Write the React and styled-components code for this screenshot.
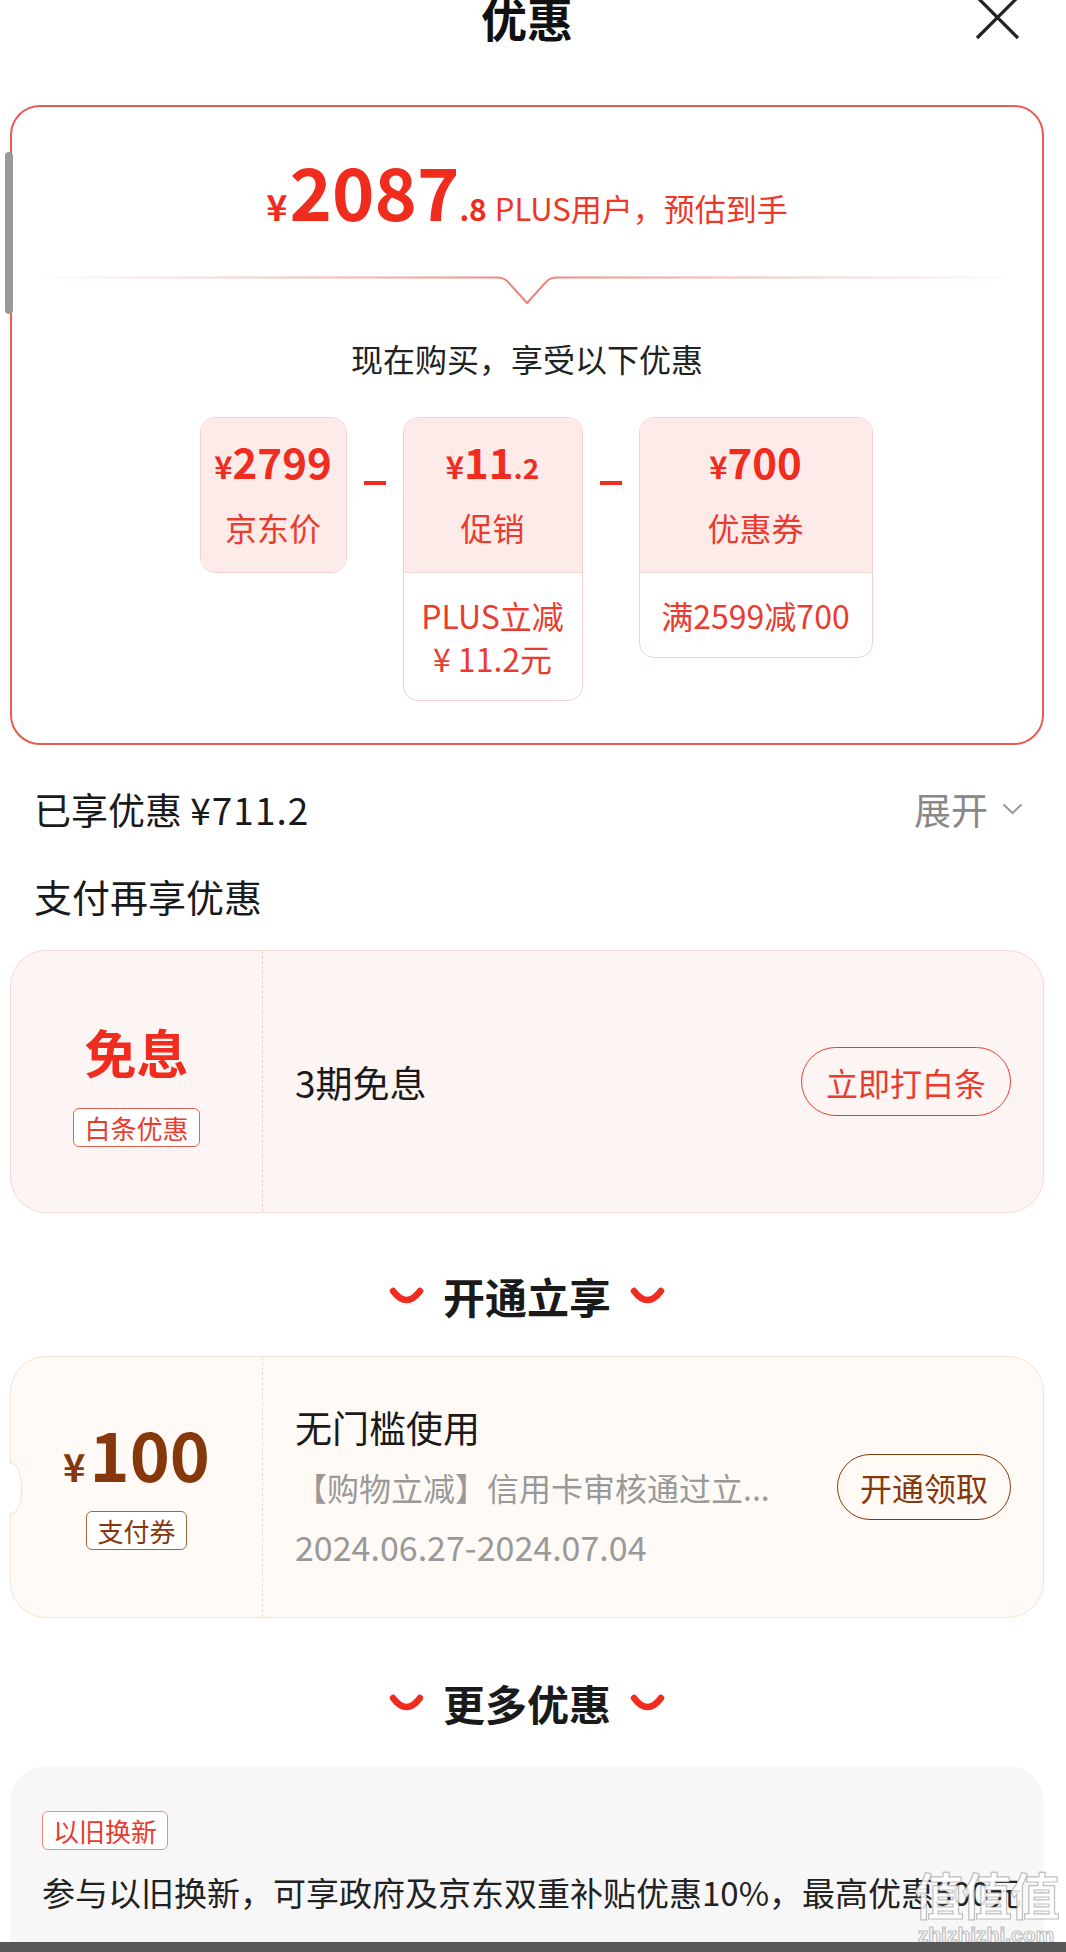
import React from "react";
import styled, { createGlobalStyle } from "styled-components";

const RED = "#ef2c1d";
const RED_SOFT = "#e93b2e";
const BROWN = "#86380d";

const Global = createGlobalStyle`
  html, body { margin: 0; padding: 0; background: #fff; }
  body {
    font-family: "Noto Sans CJK SC", "Noto Sans", Roboto, sans-serif;
    -webkit-font-smoothing: antialiased;
  }
  * { box-sizing: border-box; }
`;

const Page = styled.div`
  position: relative;
  width: 1066px;
  height: 1952px;
  overflow: hidden;
  background: #fff;
`;

const Header = styled.header`
  display: grid;
  grid-template-columns: 1fr auto 1fr;
  align-items: start;
  height: 105px;
  margin: 0 22px 0 10px;
`;

const Title = styled.h1`
  grid-column: 2;
  margin: -6px 0 0;
  font-size: 46px;
  line-height: 46px;
  font-weight: 700;
  color: #111;
`;

const Close = styled.svg`
  grid-column: 3;
  justify-self: end;
  margin: -5px 24px 0 0;
  width: 45px;
  height: 45px;
`;

const PriceCard = styled.section`
  margin: 0 22px 0 10px;
  height: 640px;
  border: 2px solid #ea5a4e;
  border-radius: 30px;
  display: flex;
  flex-direction: column;
  align-items: center;
`;

const PriceLine = styled.div`
  display: flex;
  align-items: baseline;
  margin-top: 47px;
  color: ${RED};
`;

const Num = styled.span`
  font-size: ${(p) => p.$size}px;
  font-weight: ${(p) => (p.$light ? 400 : 700)};
  line-height: 1;
  margin-left: ${(p) => p.$ml || 0}px;
  letter-spacing: ${(p) => p.$ls || 0}px;
  color: ${(p) => p.$color || "inherit"};
`;

const Divider = styled.svg`
  display: block;
  margin-top: 50px;
  width: 964px;
  height: 30px;
`;

const Subtitle = styled.div`
  margin-top: 32px;
  font-size: 32px;
  line-height: 40px;
  color: #222;
`;

const BreakRow = styled.div`
  display: flex;
  align-items: flex-start;
  margin-top: 39px;
  padding-left: 18px;
`;

const Box = styled.div`
  width: ${(p) => p.$w}px;
  flex-shrink: 0;
  border: 1px solid #f6d0cb;
  border-radius: 15px;
  overflow: hidden;
  background: #fff;
  display: flex;
  flex-direction: column;
`;

const BoxTop = styled.div`
  height: 154px;
  background: #fdebea;
  display: flex;
  flex-direction: column;
  align-items: center;
  padding-top: 22px;
`;

const Amount = styled.div`
  display: flex;
  align-items: baseline;
  color: ${(p) => p.$color || RED};
`;

const BoxLabel = styled.div`
  margin-top: 25px;
  font-size: 32px;
  line-height: 40px;
  color: ${RED_SOFT};
`;

const BoxBottom = styled.div`
  border-top: 1px solid #f7d6d1;
  padding: 21px 0 20px;
  font-size: 32px;
  line-height: 43px;
  color: ${RED_SOFT};
  text-align: center;
  white-space: nowrap;
`;

const Minus = styled.div`
  flex-shrink: 0;
  width: 22px;
  height: 4px;
  margin: 64px 17px 0;
  background: ${RED};
`;

const InfoRow = styled.div`
  display: flex;
  justify-content: space-between;
  align-items: center;
  margin: 39px 43px 0 34px;
  height: 50px;
`;

const InfoText = styled.div`
  font-size: 37px;
  line-height: 50px;
  color: #1a1a1a;
  white-space: nowrap;
`;

const Expand = styled.div`
  display: flex;
  align-items: center;
  gap: 14px;
  font-size: 37px;
  line-height: 50px;
  color: #888;
`;

const SectionTitle = styled.div`
  margin: 37px 0 0 34px;
  font-size: 38px;
  line-height: 50px;
  color: #1a1a1a;
`;

const Coupon = styled.div`
  position: relative;
  margin: ${(p) => p.$mt}px 22px 0 10px;
  height: ${(p) => p.$h}px;
  border: 1px solid ${(p) => p.$border};
  background: ${(p) => p.$bg};
  border-radius: 36px;
  display: grid;
  grid-template-columns: 252px 1fr;

  ${(p) =>
    p.$notch &&
    `
    &::before {
      content: "";
      position: absolute;
      left: -1px;
      top: 106px;
      width: 11px;
      height: 49px;
      background: #fff;
      border: 1px solid ${p.$border};
      border-left: none;
      border-top-right-radius: 10px 24.5px;
      border-bottom-right-radius: 10px 24.5px;
    }
  `}
`;

const CouponLeft = styled.div`
  display: flex;
  flex-direction: column;
  align-items: center;
  padding-top: ${(p) => p.$pt}px;
  border-right: 1.5px dashed ${(p) => p.$dash};
`;

const CouponRight = styled.div`
  display: flex;
  align-items: center;
  justify-content: space-between;
  padding: 0 32px;
`;

const BigWord = styled.div`
  font-size: 52px;
  line-height: 60px;
  font-weight: 700;
  color: ${RED};
`;

const Tag = styled.span`
  display: inline-block;
  margin-top: ${(p) => p.$mt || 0}px;
  height: 39px;
  padding: 0 10px;
  border: 1px solid ${(p) => p.$color};
  border-radius: 6px;
  font-size: 26px;
  line-height: 37px;
  color: ${(p) => p.$text || p.$color};
  background: #fff;
  white-space: nowrap;
`;

const PillButton = styled.div`
  height: ${(p) => p.$h}px;
  padding: 0 ${(p) => p.$px}px;
  border: 1.5px solid ${(p) => p.$color};
  border-radius: 40px;
  display: flex;
  align-items: center;
  font-size: 32px;
  color: ${(p) => p.$color};
  white-space: nowrap;
`;

const CouponText = styled.div`
  display: flex;
  flex-direction: column;
`;

const CouponLine = styled.div`
  font-size: ${(p) => p.$size}px;
  line-height: 60px;
  color: ${(p) => p.$color};
  white-space: nowrap;
`;

const SectionHeader = styled.div`
  display: flex;
  justify-content: center;
  align-items: center;
  gap: 19px;
  margin: ${(p) => p.$mt}px 22px 0 10px;
  height: 60px;
  font-size: 42px;
  font-weight: 700;
  color: #1a1a1a;
`;

const Smile = styled.svg`
  width: 35px;
  height: 18px;
  margin-top: 2px;
`;

const MoreCard = styled.div`
  margin: 34px 22px 0 10px;
  height: 320px;
  background: #f7f7f7;
  border-radius: 36px;
  padding: 45px 32px 0;
`;

const MoreText = styled.div`
  margin-top: 17px;
  font-size: 33px;
  line-height: 50px;
  color: #222;
  white-space: nowrap;
`;

const Scrollbar = styled.div`
  position: absolute;
  left: 5px;
  top: 152px;
  width: 8px;
  height: 162px;
  border-radius: 4px;
  background: #999;
`;

const Watermark = styled.div`
  position: absolute;
  right: 8px;
  top: 1862px;
  display: flex;
  flex-direction: column;
  align-items: center;
  color: rgba(255, 255, 255, 0.85);
  -webkit-text-stroke: 1.2px rgba(130, 130, 130, 0.5);
  pointer-events: none;
`;

const WmLogo = styled.div`
  font-size: 50px;
  line-height: 62px;
  font-weight: 700;
  letter-spacing: -2px;
`;

const WmUrl = styled.div`
  font-family: "Liberation Sans", sans-serif;
  font-size: 21px;
  line-height: 22px;
  font-weight: 700;
`;

const NavBar = styled.div`
  position: absolute;
  left: 0;
  right: 0;
  bottom: 0;
  height: 10px;
  background: #585858;
`;

function SmileIcon() {
  return (
    <Smile viewBox="0 0 35 18">
      <path
        d="M4 4 Q17.5 22 31 4"
        fill="none"
        stroke={RED}
        strokeWidth="6.5"
        strokeLinecap="round"
      />
    </Smile>
  );
}

export default function App() {
  return (
    <Page>
      <Global />
      <Header>
        <Title>优惠</Title>
        <Close viewBox="0 0 45 45">
          <path d="M2 2 L43 43 M43 2 L2 43" stroke="#222" strokeWidth="3.2" fill="none" />
        </Close>
      </Header>

      <PriceCard>
        <PriceLine>
          <Num $size={36}>¥</Num>
          <Num $size={72} $ml={2}>2087</Num>
          <Num $size={30}>.8</Num>
          <Num $size={31} $light $ml={8} $color="#ee3727">PLUS用户，预估到手</Num>
        </PriceLine>

        <Divider viewBox="0 0 964 30">
          <defs>
            <linearGradient id="dl" x1="0" y1="0" x2="1" y2="0">
              <stop offset="0" stopColor="#f3a49c" stopOpacity="0.05" />
              <stop offset="0.35" stopColor="#f08d83" stopOpacity="0.7" />
              <stop offset="0.5" stopColor="#ee7f74" stopOpacity="1" />
              <stop offset="0.65" stopColor="#f08d83" stopOpacity="0.7" />
              <stop offset="1" stopColor="#f3a49c" stopOpacity="0.05" />
            </linearGradient>
          </defs>
          <path
            d="M0 1.5 H452 Q459 1.5 463 6 L482 27 L501 6 Q505 1.5 512 1.5 H964"
            fill="none"
            stroke="url(#dl)"
            strokeWidth="2"
            strokeLinejoin="round"
          />
        </Divider>

        <Subtitle>现在购买，享受以下优惠</Subtitle>

        <BreakRow>
          <Box $w={147}>
            <BoxTop>
              <Amount>
                <Num $size={31}>¥</Num>
                <Num $size={42}>2799</Num>
              </Amount>
              <BoxLabel>京东价</BoxLabel>
            </BoxTop>
          </Box>
          <Minus />
          <Box $w={180}>
            <BoxTop>
              <Amount>
                <Num $size={31}>¥</Num>
                <Num $size={42}>11</Num>
                <Num $size={28}>.2</Num>
              </Amount>
              <BoxLabel>促销</BoxLabel>
            </BoxTop>
            <BoxBottom>
              PLUS立减
              <br />¥ 11.2元
            </BoxBottom>
          </Box>
          <Minus />
          <Box $w={234}>
            <BoxTop>
              <Amount>
                <Num $size={31}>¥</Num>
                <Num $size={42}>700</Num>
              </Amount>
              <BoxLabel>优惠券</BoxLabel>
            </BoxTop>
            <BoxBottom>满2599减700</BoxBottom>
          </Box>
        </BreakRow>
      </PriceCard>

      <InfoRow>
        <InfoText>
          已享优惠 <Num $size={37} $light $ls={1}>¥711.2</Num>
        </InfoText>
        <Expand>
          展开
          <svg width="21" height="12" viewBox="0 0 21 12">
            <path d="M1.5 1.5 L10.5 10 L19.5 1.5" fill="none" stroke="#999" strokeWidth="2" />
          </svg>
        </Expand>
      </InfoRow>

      <SectionTitle>支付再享优惠</SectionTitle>

      <Coupon $mt={29} $h={263} $bg="#fdf5f4" $border="#f4d9d5">
        <CouponLeft $pt={71} $dash="#f2cdc8">
          <BigWord>免息</BigWord>
          <Tag $mt={26} $color="#ea5d52" $text={RED_SOFT}>白条优惠</Tag>
        </CouponLeft>
        <CouponRight>
          <InfoText>3期免息</InfoText>
          <PillButton $h={69} $px={24} $color={RED_SOFT}>立即打白条</PillButton>
        </CouponRight>
      </Coupon>

      <SectionHeader $mt={52}>
        <SmileIcon />
        开通立享
        <SmileIcon />
      </SectionHeader>

      <Coupon $mt={31} $h={262} $bg="#fffaf5" $border="#f3e4d6" $notch>
        <CouponLeft $pt={62} $dash="#f0d9c6">
          <Amount $color={BROWN}>
            <Num $size={38}>¥</Num>
            <Num $size={68} $ml={4}>100</Num>
          </Amount>
          <Tag $mt={24} $color="#a8643c" $text={BROWN}>支付券</Tag>
        </CouponLeft>
        <CouponRight>
          <CouponText>
            <CouponLine $size={37} $color="#1a1a1a">无门槛使用</CouponLine>
            <CouponLine $size={32} $color="#999">【购物立减】信用卡审核通过立...</CouponLine>
            <CouponLine $size={34} $color="#999">2024.06.27-2024.07.04</CouponLine>
          </CouponText>
          <PillButton $h={66} $px={22} $color={BROWN}>开通领取</PillButton>
        </CouponRight>
      </Coupon>

      <SectionHeader $mt={54}>
        <SmileIcon />
        更多优惠
        <SmileIcon />
      </SectionHeader>

      <MoreCard>
        <Tag $color="#ef8a80" $text={RED_SOFT}>以旧换新</Tag>
        <MoreText>参与以旧换新，可享政府及京东双重补贴优惠10%，最高优惠500元</MoreText>
      </MoreCard>

      <Scrollbar />
      <Watermark>
        <WmLogo>值值值</WmLogo>
        <WmUrl>zhizhizhi.com</WmUrl>
      </Watermark>
      <NavBar />
    </Page>
  );
}
